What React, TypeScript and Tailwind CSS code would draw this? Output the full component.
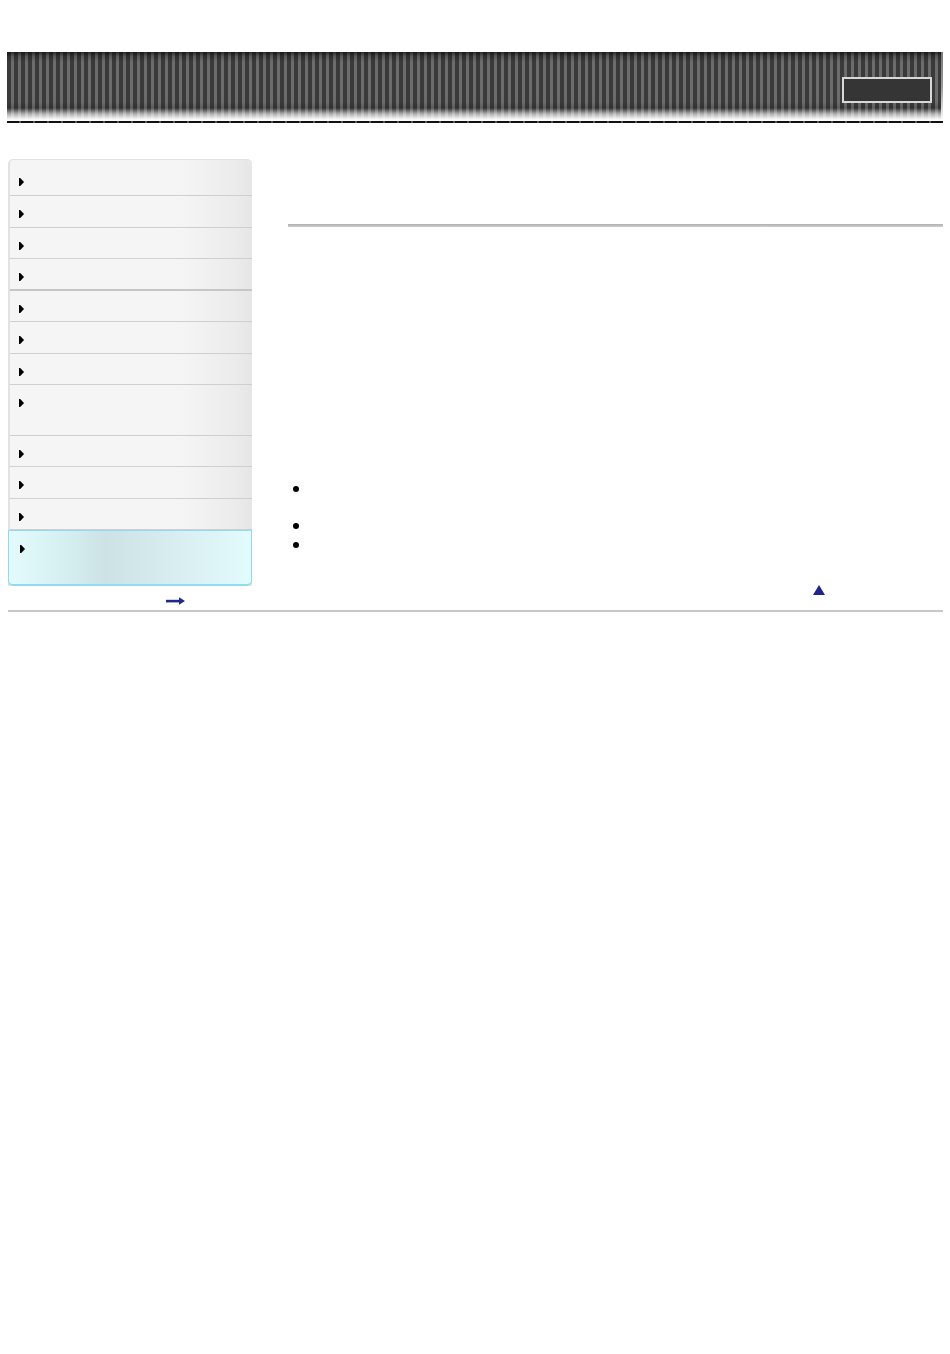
import React from "react";

const rows: { h: string; thick?: boolean }[] = [
  { h: "h-[32px]" },
  { h: "h-[32px]" },
  { h: "h-[31px]" },
  { h: "h-[32px]", thick: true },
  { h: "h-[31px]" },
  { h: "h-[32px]" },
  { h: "h-[31px]" },
  { h: "h-[51px]" },
  { h: "h-[31px]" },
  { h: "h-[32px]" },
  { h: "h-[31px]" },
];

function Arrow() {
  return (
    <svg width="5" height="8" viewBox="0 0 5 8" className="block">
      <polygon points="0,0 1.2,0 4.6,3.6 4.6,4.4 1.2,8 0,8" fill="#000" />
    </svg>
  );
}

export default function App() {
  return (
    <div className="w-[950px] h-[1354px] bg-white font-['Liberation_Sans',Arial,sans-serif] text-[12px] text-black">
      {/* Header */}
      <div className="pt-[52px] px-[7px]">
        <div className="relative h-[69px] w-[936px] bg-[repeating-linear-gradient(90deg,#3a3a3a_0px,#3a3a3a_4px,#6c6c6c_4px,#6c6c6c_7px)]">
          <div className="absolute inset-0 bg-[linear-gradient(180deg,rgba(0,0,0,0.6)_0px,rgba(0,0,0,0.2)_4px,rgba(0,0,0,0)_10px,rgba(0,0,0,0)_50px,rgba(0,0,0,0.15)_56px,rgba(255,255,255,0.6)_62px,rgba(255,255,255,0.95)_67px,#ffffff_69px)]" />
          <div className="absolute right-0 top-0 h-full w-[2px] bg-[linear-gradient(180deg,#777,#999,#fff)]" />
          <div className="absolute right-[11px] top-[25px] w-[90px] h-[26px] border-2 border-[#d8d8d8] bg-[#353535]" />
        </div>
        <div className="h-[2px] w-[936px] bg-[repeating-linear-gradient(90deg,#111_0px,#111_12px,#555_12px,#555_14px)]" />
      </div>

      {/* Body */}
      <div className="mt-[36px] ml-[8px] w-[935px]">
        <div className="flex gap-[36px]">
          {/* Sidebar */}
          <div className="w-[244px] shrink-0">
            <div className="rounded-t-[5px] border-l-2 border-t border-[#e2e2e2] pt-[4px] bg-[linear-gradient(90deg,#f5f5f5_0%,#f5f5f5_70%,#ececec_92%,#e6e6e6_100%)]">
              {rows.map((r, i) => (
                <div
                  key={i}
                  className={`${r.h} ${r.thick ? "border-b-2 border-[#c6c6c6]" : "border-b border-[#cfcfcf]"} pl-[9px] pt-[14px] box-border`}
                >
                  <Arrow />
                </div>
              ))}
              <div className="h-[56px] -ml-[2px] pl-[11px] pt-[14px] box-border rounded-b-[5px] border border-[#8fdcf2] border-b-2 bg-[linear-gradient(90deg,#e3fbfd_0%,#d4eef0_25%,#cde2e5_40%,#d9eef0_70%,#e2fbfd_100%)]">
                <Arrow />
              </div>
            </div>
            <div className="h-[24px] flex items-end pb-[5px] pl-[158px]">
              <svg width="20" height="8" viewBox="0 0 20 8">
                <rect x="0" y="2.8" width="14" height="2.6" fill="#1e2a8a" />
                <polygon points="13,0.3 19,4 13,7.7" fill="#1e2a8a" />
              </svg>
            </div>
          </div>

          {/* Main */}
          <div className="flex-1 relative">
            <div className="h-[65px]" />
            <div className="h-[3px] bg-[linear-gradient(180deg,#b0b0b0,#cfcfcf)]" />
            <div className="h-[259px]" />
            <ul className="pl-[5px]">
              <li className="flex items-start h-[37px]">
                <span className="w-[6px] h-[6px] rounded-full bg-black" />
              </li>
              <li className="flex items-start h-[19px]">
                <span className="w-[6px] h-[6px] rounded-full bg-black" />
              </li>
              <li className="flex items-start h-[20px]">
                <span className="w-[6px] h-[6px] rounded-full bg-black" />
              </li>
            </ul>
            <div className="h-[23px]" />
            <div className="flex justify-end pr-[118px]">
              <svg width="12" height="10" viewBox="0 0 12 10">
                <polygon points="6,0 12,10 0,10" fill="#1a2390" />
              </svg>
            </div>
          </div>
        </div>
        <div className="h-[2px] bg-[#c8c8c8]" />
      </div>
    </div>
  );
}
